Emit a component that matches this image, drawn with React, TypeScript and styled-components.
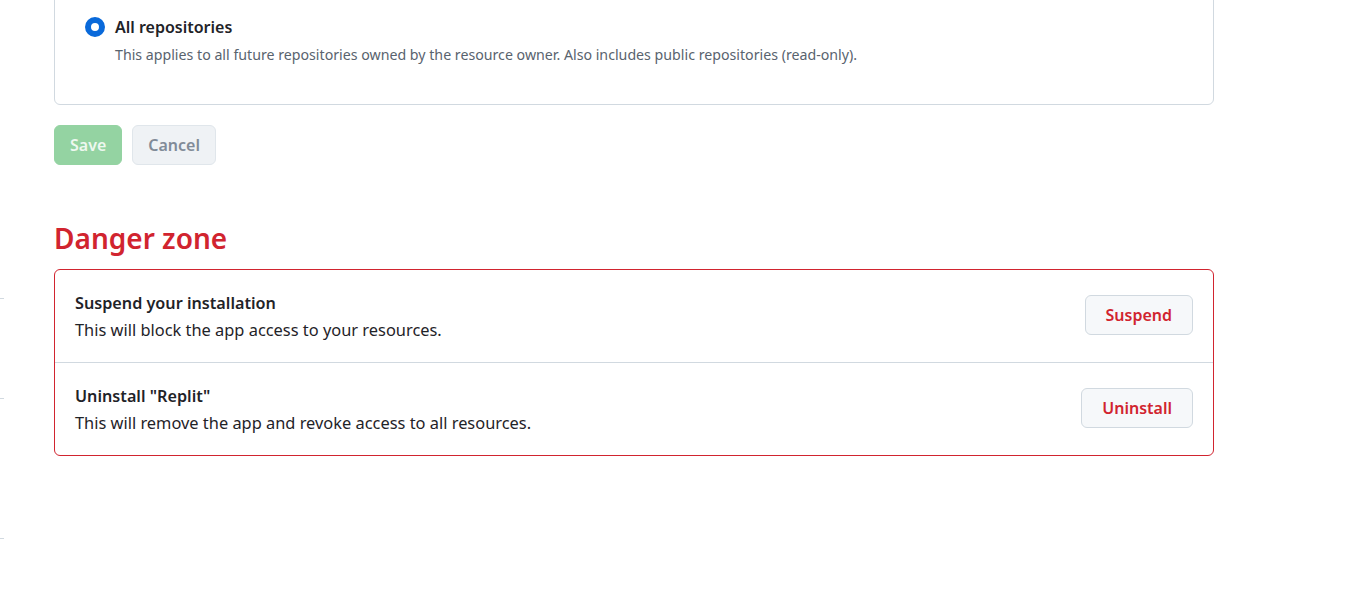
import { FC } from 'react';
import styled, { createGlobalStyle } from 'styled-components';

const GlobalStyle = createGlobalStyle`
    body {
        margin: 0;
        background: #ffffff;
        color: #1f2328;
        font-family: "Noto Sans", "Open Sans", sans-serif;
    }
`;

const Page = styled.div`
    display: flex;
    min-height: 602px;
    overflow: hidden;
`;

const Rail = styled.div`
    width: 4px;
    display: flex;
    flex-direction: column;
    padding-top: 298px;
    gap: 99px;
`;

const Tick = styled.span<{ $gap?: number }>`
    display: block;
    height: 1px;
    background: #d1d9e0;
    margin-top: ${(p) => p.$gap ?? 0}px;
`;

const Main = styled.div`
    width: 1160px;
    margin-left: 50px;
`;

const Card = styled.div`
    margin-top: -20px;
    border: 1px solid #d1d9e0;
    border-radius: 6px;
    padding: 35px 30px 39px 30px;
`;

const RadioRow = styled.label`
    display: flex;
    gap: 10px;
    align-items: flex-start;
`;

const Radio = styled.span`
    flex: none;
    width: 20px;
    height: 20px;
    box-sizing: border-box;
    border-radius: 50%;
    border: 6px solid #0969da;
    background: #ffffff;
    margin-top: 1px;
`;

const RadioText = styled.div`
    display: flex;
    flex-direction: column;
`;

const RadioTitle = styled.span`
    font-size: 16px;
    font-weight: 600;
    line-height: 22px;
`;

const Note = styled.span`
    margin-top: 6px;
    font-size: 14.2px;
    line-height: 21px;
    color: #59636e;
`;

const Actions = styled.div`
    display: flex;
    gap: 10px;
    margin-top: 20px;
`;

const FormButton = styled.button<{ $primary?: boolean }>`
    height: 40px;
    padding: 0 15px;
    border-radius: 6px;
    font-family: inherit;
    font-size: 16px;
    font-weight: 600;
    border: 1px solid ${(p) => (p.$primary ? '#94d3a2' : '#e0e6eb')};
    background: ${(p) => (p.$primary ? '#94d3a2' : '#eff2f5')};
    color: ${(p) => (p.$primary ? 'rgba(255,255,255,0.85)' : '#818b98')};
`;

const DangerTitle = styled.h2`
    margin: 54px 0 12px;
    font-size: 28px;
    font-weight: 600;
    line-height: 38px;
    color: #d1242f;
`;

const DangerBox = styled.div`
    border: 1px solid #d1242f;
    border-radius: 6px;
`;

const DangerRow = styled.div`
    display: flex;
    align-items: center;
    justify-content: space-between;
    padding: 0 20px;
    height: 92px;

    & + & {
        border-top: 1px solid #d1d9e0;
    }
`;

const RowText = styled.div`
    display: flex;
    flex-direction: column;
    gap: 3px;
    padding-top: 1px;
`;

const RowTitle = styled.strong`
    font-size: 16.2px;
    font-weight: 600;
    line-height: 24px;
`;

const RowDesc = styled.span`
    font-size: 16.4px;
    line-height: 24px;
`;

const DangerButton = styled.button`
    height: 40px;
    padding: 0 20px;
    margin-bottom: 3px;
    border-radius: 6px;
    border: 1px solid #d1d9e0;
    background: #f6f8fa;
    color: #d1242f;
    font-family: inherit;
    font-size: 16px;
    font-weight: 600;
`;

interface DangerItem {
    title: string;
    desc: string;
    action: string;
}

const dangerItems: DangerItem[] = [
    { title: 'Suspend your installation', desc: 'This will block the app access to your resources.', action: 'Suspend' },
    { title: 'Uninstall "Replit"', desc: 'This will remove the app and revoke access to all resources.', action: 'Uninstall' },
];

const App: FC = () => {
    return (
        <Page>
            <GlobalStyle />
            <Rail>
                <Tick />
                <Tick />
                <Tick $gap={40} />
            </Rail>
            <Main>
                <Card>
                    <RadioRow>
                        <Radio />
                        <RadioText>
                            <RadioTitle>All repositories</RadioTitle>
                            <Note>
                                This applies to all future repositories owned by the resource owner. Also includes public repositories (read-only).
                            </Note>
                        </RadioText>
                    </RadioRow>
                </Card>
                <Actions>
                    <FormButton $primary>Save</FormButton>
                    <FormButton>Cancel</FormButton>
                </Actions>
                <DangerTitle>Danger zone</DangerTitle>
                <DangerBox>
                    {dangerItems.map((item) => (
                        <DangerRow key={item.action}>
                            <RowText>
                                <RowTitle>{item.title}</RowTitle>
                                <RowDesc>{item.desc}</RowDesc>
                            </RowText>
                            <DangerButton>{item.action}</DangerButton>
                        </DangerRow>
                    ))}
                </DangerBox>
            </Main>
        </Page>
    );
};

export default App;
